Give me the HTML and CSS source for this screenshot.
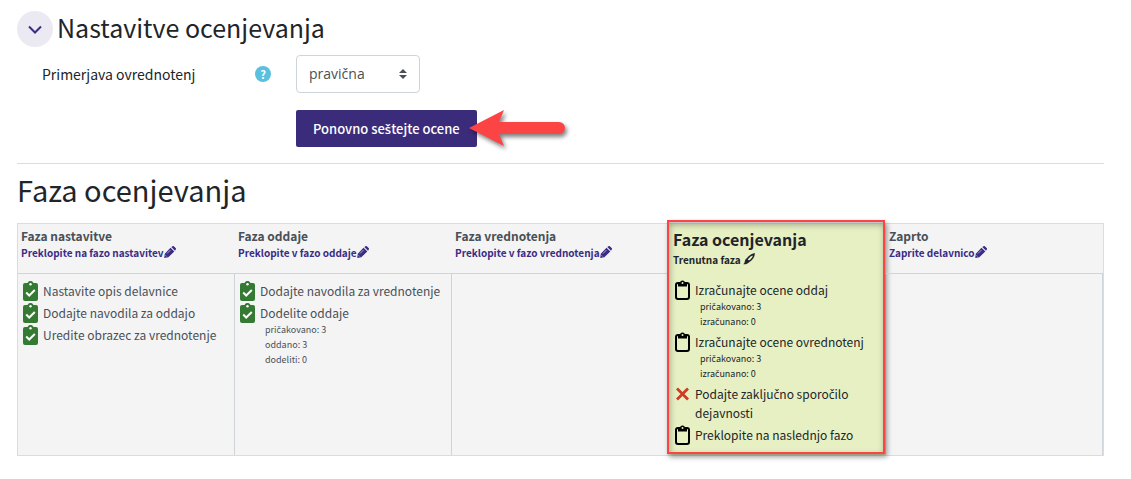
FILE: index.html
```html
<!DOCTYPE html>
<html lang="sl">
<head>
	<title>Faza ocenjevanja</title>
	<meta charset="utf-8" />
	<meta name="viewport" content="width=device-width, initial-scale=1.0" />
	<link rel="stylesheet" href="styles.css">
</head>
<body>
<!-- icons used in the phase plan -->
<svg class="sprite" aria-hidden="true">
	<symbol id="done" viewBox="0 0 15 20">
		<path fill="#357a32" d="M2 2h2.500a3.200 3.200 0 0 1 6 0H13a2 2 0 0 1 2 2v14a2 2 0 0 1-2 2H2a2 2 0 0 1-2-2V4a2 2 0 0 1 2-2z"/>
		<circle cx="7.500" cy="3.300" r="1.200" fill="#fff"/>
		<path fill="none" stroke="#fff" stroke-width="2" d="M3.200 11.500l3 3 5.600-5.500"/>
	</symbol>
	<symbol id="todo" viewBox="0 0 15 20">
		<rect x="1" y="3" width="13" height="16" rx="2" fill="none" stroke="#000" stroke-width="2"/>
		<path fill="#000" d="M3 3h2a2.500 2.500 0 0 1 5 0h2v3.500H3z"/>
		<circle cx="7.500" cy="3" r="1" fill="#e7f0c3"/>
	</symbol>
	<symbol id="fail" viewBox="0 0 15 20">
		<path fill="none" stroke="#d13a25" stroke-width="2.800" d="M2 4.500l11 11M13 4.500l-11 11"/>
	</symbol>
	<symbol id="pencil" viewBox="0 0 12 12">
		<path fill="currentColor" d="M6.500 1.700l3.800 3.800L4.300 11.300 .200 11.900 .800 7.700zM7.300 1L8.500 .200q.900-.500 1.600 .200l1.500 1.500q.700.700.200 1.600L11 4.700z"/>
		<path fill="none" stroke="#f4f4f4" stroke-width=".6" d="M3 7.500L6.500 4M1.500 9.300l1.200 1.200"/>
	</symbol>
	<symbol id="brush" viewBox="0 0 12 12">
		<path fill="none" stroke="currentColor" stroke-width="1.500" d="M3.600 6.500Q7 2 11 1q0 4-5 7.500z"/>
		<path fill="currentColor" d="M3.500 5.800l3 2.700Q5 11.500 .300 11.300 2 10 1.800 8.300 2 6.400 3.500 5.800z"/>
	</symbol>
</svg>

<main>
	<form class="settings">
		<div class="legend">
			<button type="button" class="toggle" aria-label="Strni">
				<svg viewBox="0 0 14 9"><path d="M1 1.500l6 6 6-6"/></svg>
			</button>
			<h3>Nastavitve ocenjevanja</h3>
		</div>
		<div class="row">
			<div class="label">
				<label for="comparison">Primerjava ovrednotenj</label>
				<button type="button" class="help" aria-label="Pomoč">?</button>
			</div>
			<div class="field">
				<select id="comparison"><option>pravična</option></select>
				<svg class="caret" viewBox="0 0 8 10"><path d="M4 0l4 4H0zM4 10L0 6h8z"/></svg>
			</div>
		</div>
		<div class="row">
			<div class="field submit">
				<button type="submit">Ponovno se<span class="caron">š</span>tejte ocene</button>
				<svg class="arrow" viewBox="0 0 96 38"><path d="M0 18L35 0l-5 12h60a6 6 0 0 1 0 12H30l5 12z"/></svg>
			</div>
		</div>
	</form>

	<h2>Faza ocenjevanja</h2>

	<div class="plan">
		<section class="phase">
			<header>
				<h4>Faza nastavitve</h4>
				<a href="#">Preklopite na fazo nastavitev<svg><use href="#pencil"/></svg></a>
			</header>
			<ul class="tasks">
				<li><svg><use href="#done"/></svg>Nastavite opis delavnice</li>
				<li><svg><use href="#done"/></svg>Dodajte navodila za oddajo</li>
				<li><svg><use href="#done"/></svg>Uredite obrazec za vrednotenje</li>
			</ul>
		</section>
		<section class="phase">
			<header>
				<h4>Faza oddaje</h4>
				<a href="#">Preklopite v fazo oddaje<svg><use href="#pencil"/></svg></a>
			</header>
			<ul class="tasks">
				<li><svg><use href="#done"/></svg>Dodajte navodila za vrednotenje</li>
				<li><svg><use href="#done"/></svg>Dodelite oddaje
					<div class="details">pri<span class="caron">č</span>akovano: 3<br>oddano: 3<br>dodeliti: 0</div>
				</li>
			</ul>
		</section>
		<section class="phase">
			<header>
				<h4>Faza vrednotenja</h4>
				<a href="#">Preklopite v fazo vrednotenja<svg><use href="#pencil"/></svg></a>
			</header>
			<ul class="tasks"></ul>
		</section>
		<section class="phase active">
			<header>
				<h4>Faza ocenjevanja</h4>
				<span>Trenutna faza <svg><use href="#brush"/></svg></span>
			</header>
			<ul class="tasks">
				<li><svg><use href="#todo"/></svg>Izra<span class="caron">č</span>unajte ocene oddaj
					<div class="details">pri<span class="caron">č</span>akovano: 3<br>izra<span class="caron">č</span>unano: 0</div>
				</li>
				<li><svg><use href="#todo"/></svg>Izra<span class="caron">č</span>unajte ocene ovrednotenj
					<div class="details">pri<span class="caron">č</span>akovano: 3<br>izra<span class="caron">č</span>unano: 0</div>
				</li>
				<li><svg><use href="#fail"/></svg>Podajte zaklju<span class="caron">č</span>no sporo<span class="caron">č</span>ilo<br>dejavnosti</li>
				<li><svg><use href="#todo"/></svg>Preklopite na naslednjo fazo</li>
			</ul>
			<div class="highlight"></div>
		</section>
		<section class="phase">
			<header>
				<h4>Zaprto</h4>
				<a href="#">Zaprite delavnico<svg><use href="#pencil"/></svg></a>
			</header>
			<ul class="tasks"></ul>
		</section>
	</div>
</main>
</body>
</html>
```
FILE: styles.css
```css
* {
	box-sizing: border-box;
}
body {
	margin: 0;
	background: #fff;
	color: #212529;
	font: 14px/20px "Noto Sans CJK SC", "Open Sans", sans-serif;
}
h2, h3, h4, ul {
	margin: 0;
	padding: 0;
	font-weight: normal;
}
button, select {
	font: inherit;
}
.caron {
	font-family: "Open Sans", sans-serif;
	line-height: 1px;
}
.sprite {
	position: absolute;
	width: 0;
	height: 0;
}
main {
	padding: 11px 27px 20px 17px;
}

/* grading settings */
.settings {
	padding-bottom: 16px;
	border-bottom: 1px solid #dcdcdc;
}
.legend {
	display: flex;
	align-items: center;
	gap: 4px;
	height: 36px;
	margin-bottom: 8px;
}
.legend h3 {
	padding-bottom: 4px;
	font-size: 25px;
	line-height: 32px;
}
.toggle {
	display: flex;
	align-items: center;
	justify-content: center;
	width: 36px;
	height: 36px;
	padding: 0;
	border: 0;
	border-radius: 50%;
	background: #ebe9f2;
}
.toggle svg {
	width: 14px;
	height: 9px;
	fill: none;
	stroke: #3b2c85;
	stroke-width: 2;
}
.row {
	display: grid;
	grid-template-columns: 254px 1fr;
	padding-left: 25px;
}
.row + .row {
	margin-top: 17px;
}
.label {
	display: flex;
	align-items: center;
	justify-content: space-between;
	padding-right: 25px;
}
.help {
	width: 16px;
	height: 16px;
	padding: 0;
	border: 0;
	border-radius: 50%;
	background: #5bc0de;
	color: #fff;
	font-size: 11px;
	font-weight: bold;
	line-height: 16px;
}
.field {
	position: relative;
	justify-self: start;
}
.field select {
	display: block;
	width: 124px;
	height: 38px;
	padding: 0 12px;
	border: 1px solid #ced4da;
	border-radius: 4px;
	background: #fff;
	color: #495057;
	font-family: "Open Sans", sans-serif;
	appearance: none;
}
.caret {
	position: absolute;
	top: 14px;
	right: 13px;
	width: 8px;
	height: 10px;
	fill: #495057;
	pointer-events: none;
}
.submit {
	grid-column: 2;
}
.submit button {
	display: block;
	height: 37px;
	padding: 0 17px;
	border: 0;
	border-radius: 2px;
	background: #3b2c7b;
	color: #fff;
	font-size: 13px;
	font-weight: 500;
}
.submit .caron {
	font-weight: 600;
}
.arrow {
	position: absolute;
	left: 173px;
	top: 0;
	width: 96px;
	height: 38px;
	fill: #fd4444;
	overflow: visible;
	filter: drop-shadow(2px 3px 2px rgba(0, 0, 0, .5));
}
h2 {
	margin: 5px 0 14px;
	font-size: 29px;
	line-height: 40px;
}

/* phases of the workshop */
.plan {
	display: grid;
	grid-template-columns: repeat(5, 1fr);
	border: 1px solid #dcdcdc;
	background: #f4f4f4;
	color: #495057;
	font-size: 12px;
	line-height: 19px;
}
.phase {
	display: flex;
	flex-direction: column;
	position: relative;
	min-width: 0;
}
.phase header {
	height: 50px;
	padding: 4px 3px;
	border-bottom: 1px solid #ced4da;
	font-size: 10px;
	font-weight: bold;
	line-height: 17px;
}
.phase h4 {
	font-size: 12px;
	font-weight: bold;
	line-height: 16px;
}
.phase header a {
	color: #3b2c85;
	text-decoration: none;
}
.phase header svg {
	width: 12px;
	height: 12px;
	vertical-align: -1px;
}
.tasks {
	flex: 1;
	padding: 7px 5px;
	border-right: 1px solid #ced4da;
	list-style: none;
}
.tasks li {
	margin-bottom: 3px;
	padding-left: 20px;
}
.tasks li > svg {
	float: left;
	width: 15px;
	height: 20px;
	margin-left: -20px;
}
.details {
	padding-left: 5px;
	font-size: 9px;
	line-height: 15px;
}
.active {
	background: #e7f0c3;
	color: #212529;
}
.active header {
	padding: 5px 4px;
	border-color: transparent;
	line-height: 22px;
}
.active h4 {
	font-size: 16px;
	line-height: 20px;
}
.active .tasks {
	padding: 6px 6px 8px;
}
.highlight {
	position: absolute;
	inset: -4px 1px 1px -2px;
	border: 2px solid #fd4444;
	box-shadow: 2px 3px 5px rgba(0, 0, 0, .4), inset 1px 3px 6px rgba(0, 0, 0, .3);
	pointer-events: none;
}
```
